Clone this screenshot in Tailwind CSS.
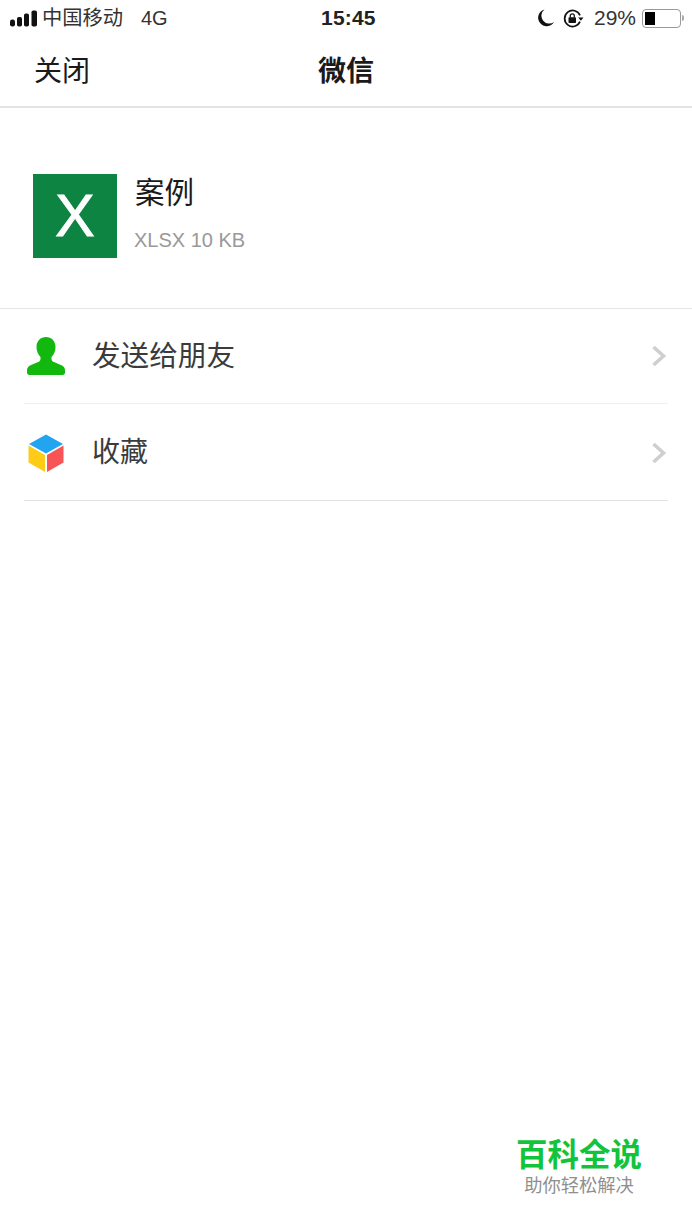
<!DOCTYPE html>
<html lang="zh">
<head>
<meta charset="utf-8">
<script src="https://cdn.jsdelivr.net/npm/@tailwindcss/browser@4"></script>
</head>
<body class="bg-white">
<div class="relative w-[692px] h-[1230px] overflow-hidden bg-white text-[#1a1a1a] font-['Liberation_Sans','Noto_Sans_CJK_SC',sans-serif]">
  <!-- status bar -->
  <div class="relative h-[36px] flex items-center justify-between pl-[10px] pr-[8px]">
    <div class="flex items-center">
      <svg width="27" height="17" viewBox="0 0 27 17" fill="#111"><rect x="0" y="9.500" width="5" height="7" rx="2.200"/><rect x="7" y="7" width="5" height="9.500" rx="1.800"/><rect x="14" y="3.500" width="5" height="13" rx="1.800"/><rect x="21.500" y="0.500" width="5.500" height="16" rx="1.800"/></svg>
      <span class="ml-[5px] text-[20.300px] leading-[24px] w-[81px] text-[#333] whitespace-nowrap">中国移动</span>
      <span class="ml-[18px] text-[20px] leading-[24px] text-[#333]">4G</span>
    </div>
    <div class="absolute left-[321px] top-[5px] text-[21px] leading-[26px] font-bold tracking-[0.2px] text-[#222]">15:45</div>
    <div class="flex items-center">
      <svg width="18" height="18" viewBox="0 0 18 18" fill="#111"><path d="M7.500 0.500 A8.500 8.500 0 1 0 17 13 A7.500 7.500 0 0 1 7.500 0.500Z"/></svg>
      <svg class="ml-[8px]" width="21" height="19" viewBox="0 0 21 19" fill="none"><path d="M17 6.300 A8 8 0 1 0 17 12.700" stroke="#111" stroke-width="1.700"/><path d="M15.200 8.500h5.300l-2.600 3.300z" fill="#111"/><rect x="5.500" y="8.300" width="7.500" height="5.700" rx="0.800" fill="#111"/><path d="M7.300 8.500V6.800a2 2 0 0 1 4 0V8.500" stroke="#111" stroke-width="1.300"/></svg>
      <span class="ml-[10px] text-[21px] leading-[26px] text-[#333]">29%</span>
      <div class="ml-[6px] w-[39px] h-[19px] rounded-[4px] border border-[#999] p-[2px] flex">
        <div class="w-[10px] bg-black"></div>
      </div>
      <div class="ml-[1px] w-[2px] h-[6px] bg-[#aaa] rounded-r-[2px]"></div>
    </div>
  </div>
  <!-- nav bar -->
  <div class="relative h-[72px] border-b-2 border-[#e3e3e3] flex items-center justify-center pt-[2px]">
    <span class="absolute left-[34px] top-[19px] text-[28px] leading-[34px]">关闭</span>
    <span class="text-[28px] leading-[34px] font-bold">微信</span>
  </div>
  <!-- file -->
  <div class="h-[201px] border-b border-[#e6e6e6] pl-[33px] pt-[66px] flex items-start">
    <div class="w-[84px] h-[84px] bg-[#0e8442] flex items-center justify-center text-white text-[59px] leading-none [-webkit-text-stroke:1px_white]">X</div>
    <div class="ml-[18px] mt-[1px]">
      <div class="text-[29.500px] leading-[36px]">案例</div>
      <div class="mt-[17px] -ml-[1px] text-[20px] leading-[24px] text-[#999]">XLSX 10 KB</div>
    </div>
  </div>
  <!-- rows -->
  <div class="mx-[24px] w-[644px]">
    <div class="h-[95px] border-b border-[#efefef] flex items-center">
      <svg class="ml-[3px] shrink-0" width="38" height="38" viewBox="0 0 38 38" fill="#13b80f"><path d="M19 0c5.500 0 9.500 4 9.500 10 0 4-1.500 7.500-4 10v2c0 1.500 1 2.500 3 3.300l7 3c2 .9 3.500 2.500 3.500 5v2.200c0 1.500-1 2.500-2.500 2.500H2.500C1 38 0 37 0 35.500V33.300c0-2.500 1.500-4.100 3.500-5l7-3c2-.8 3-1.800 3-3.300v-2c-2.500-2.500-4-6-4-10C9.500 4 13.500 0 19 0Z"/></svg>
      <span class="ml-[27px] text-[28.600px] leading-[36px] text-[#3b3b3b] whitespace-nowrap">发送给朋友</span>
      <svg class="ml-auto mr-[1px]" width="16" height="24" viewBox="0 0 16 24" fill="none"><path d="M2.500 3 L12.500 12 L2.500 21" stroke="#cfcfcf" stroke-width="3.600"/></svg>
    </div>
    <div class="h-[97px] border-b border-[#e2e2e2] flex items-center">
      <svg class="ml-[4px] mt-[2px] shrink-0" width="36" height="38" viewBox="0 0 36 38"><path d="M18 0.500 L35 10 L18 19.500 L1 10Z" fill="#22a5f1"/><path d="M0.500 11.500 L17 21 V38 L0.500 28.500Z" fill="#fecc17"/><path d="M19 21 L35.500 11.500 V28.500 L19 38Z" fill="#f85355"/></svg>
      <span class="ml-[28px] mt-[2px] text-[28px] leading-[36px] text-[#3b3b3b] whitespace-nowrap">收藏</span>
      <svg class="ml-auto mr-[1px] mt-[2px]" width="16" height="24" viewBox="0 0 16 24" fill="none"><path d="M2.500 3 L12.500 12 L2.500 21" stroke="#cfcfcf" stroke-width="3.600"/></svg>
    </div>
  </div>
  <!-- watermark -->
  <div class="absolute left-[516px] top-[1136px] w-[126px] flex flex-col items-center">
    <div class="text-[31.500px] leading-[38px] font-bold text-[#12c43c] whitespace-nowrap">百科全说</div>
    <div class="text-[18.300px] leading-[24px] text-[#8f8f8f] whitespace-nowrap">助你轻松解决</div>
  </div>
</div>
</body>
</html>
